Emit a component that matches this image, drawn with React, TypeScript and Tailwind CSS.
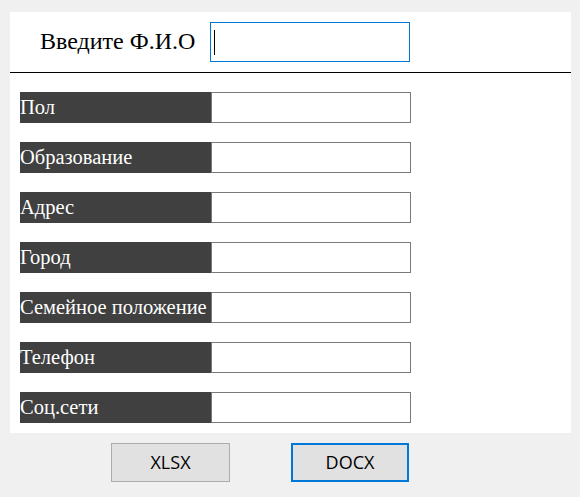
export default function App() {
  const fields = ["Пол", "Образование", "Адрес", "Город", "Семейное положение", "Телефон", "Соц.сети"];

  return (
    <div className="w-[580px] h-[497px] bg-[#f0f0f0] pt-[12px] pl-[10px] pr-[9px]">
      <div className="bg-white h-[421px] flex flex-col">
        {/* header with full name input */}
        <div className="h-[61px] flex items-start pt-[10px] border-b border-black">
          <span className="ml-[30px] mt-[5px] w-[170px] text-[24px] leading-[28px] text-black font-[Liberation_Serif,serif]">
            Введите Ф.И.О
          </span>
          <div className="w-[200px] h-[40px] border border-[#0078d7] flex items-center pl-[3px]">
            <div className="w-px h-[25px] bg-black" />
          </div>
        </div>
        <div className="flex flex-col gap-[19px] pt-[19px] pl-[10px]">
          {fields.map((f) => (
            <div key={f} className="flex h-[31px]">
              <div className="w-[191px] bg-[#404040] text-white text-[20.5px] leading-[30px] whitespace-nowrap overflow-hidden font-[Liberation_Serif,serif]">
                {f}
              </div>
              <div className="w-[200px] border border-[#7a7a7a] bg-white" />
            </div>
          ))}
        </div>
      </div>
      <div className="flex pt-[10px]">
        <button className="ml-[101px] w-[119px] h-[39px] bg-[#e1e1e1] border border-[#adadad] text-[18px] text-black font-[Open_Sans,sans-serif]">
          XLSX
        </button>
        <button className="ml-[61px] w-[118px] h-[39px] bg-[#e1e1e1] border-2 border-[#0078d7] text-[18px] text-black font-[Open_Sans,sans-serif]">
          DOCX
        </button>
      </div>
    </div>
  );
}
